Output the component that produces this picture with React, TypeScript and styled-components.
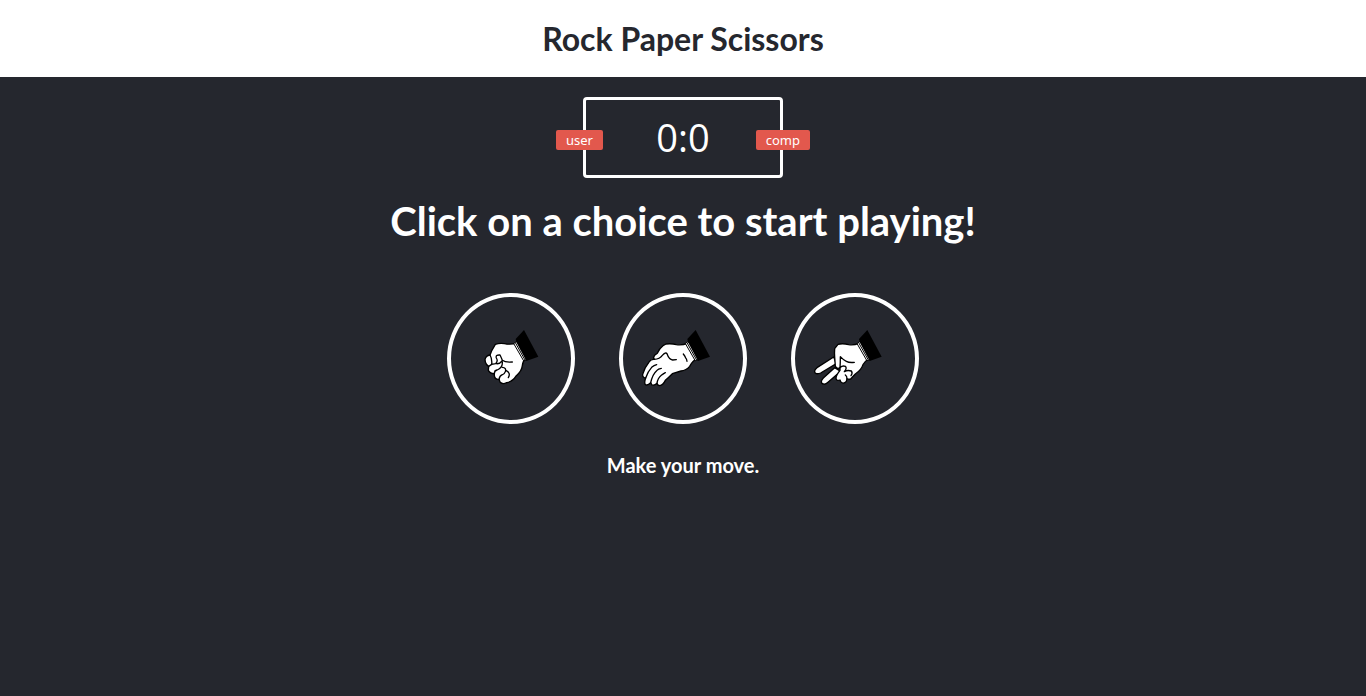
import React from "react";
import styled, { createGlobalStyle } from "styled-components";

const GlobalStyle = createGlobalStyle`
  * { margin: 0; padding: 0; box-sizing: border-box; }
  body {
    background: #25272e;
    font-family: Lato, sans-serif;
  }
`;

const Header = styled.header`
  background: #ffffff;
  padding: 20px;
`;

const Title = styled.h1`
  color: #25272e;
  font-size: 32px;
  line-height: 37px;
  font-weight: 700;
  text-align: center;
`;

const ScoreBoard = styled.section`
  position: relative;
  width: 200px;
  margin: 20px auto;
  padding: 14px 20px;
  border: 3px solid #ffffff;
  border-radius: 4px;
  color: #ffffff;
  font-family: "Open Sans", sans-serif;
  font-size: 38px;
  line-height: 47px;
  text-align: center;
`;

const Badge = styled.div<{ $side: "left" | "right" }>`
  position: absolute;
  top: 30px;
  ${(p) => (p.$side === "left" ? "left: -30px;" : "right: -30px;")}
  padding: 2px 10px;
  border-radius: 2px;
  background: #e2584d;
  font-family: "Noto Sans", sans-serif;
  font-size: 13px;
  line-height: 16px;
`;

const Result = styled.p`
  color: #ffffff;
  font-size: 40px;
  line-height: 46px;
  font-weight: 700;
  text-align: center;
`;

const Choices = styled.div`
  display: flex;
  justify-content: center;
  gap: 44px;
  margin-top: 49px;
`;

const Choice = styled.button`
  display: flex;
  align-items: center;
  justify-content: center;
  width: 128px;
  height: 131px;
  border: 4px solid #ffffff;
  border-radius: 50%;
  background: transparent;
  cursor: pointer;
  transition: background 0.3s ease;

  &:hover { background: #454954; }
`;

const Prompt = styled.p`
  margin-top: 30px;
  color: #ffffff;
  font-size: 20px;
  line-height: 23px;
  font-weight: 700;
  text-align: center;
`;

const Hand = styled.svg`
  display: block;
  flex: none;
  stroke-linecap: round;
  stroke-linejoin: round;
`;

const skin = { fill: "#fff", stroke: "#000", strokeWidth: 4 };
const crease = { fill: "none", stroke: "#000", strokeWidth: 4 };

const Cuff = ({ x }: { x: number }) => (
  <g transform={`translate(${x} 0)`}>
    <path fill="#fff" stroke="#000" strokeWidth="3" d="M-29 69 L-20 62 L10 117 L1 121 Z" />
    <path fill="none" stroke="#000" strokeWidth="3" d="M-25 67 L4 119" />
    <path fill="#000" d="M1 29 L-24 56 L-22 66 L8 122 L44 109 Z" />
  </g>
);

const Rock = () => (
  <Hand width="90" height="70" viewBox="-12 11 270 210" aria-hidden="true">
    <path {...skin} d="M76 72 Q88 68 103 70 Q124 74 139 68 L166 117 Q158 123 157 136 Q155 153 139 166 Q128 184 110 187 Q98 194 90 185 L87 177 Q74 178 73 165 L73 160 Q60 160 55 150 L56 138 Q46 132 45 118 Q47 106 60 104 Q64 91 76 72 Z" />
    <path {...crease} d="M60 104 Q67 116 65 132 L56 138 M65 132 L77 130 Q85 122 79 113 Q76 103 90 104 Q94 112 97 120 Q106 127 127 125 M79 130 Q88 132 96 122 M97 125 Q98 139 87 146 Q80 151 75 151 M73 160 Q73 151 81 149 M97 141 Q110 142 106 154 Q104 161 96 164 M87 177 Q89 166 97 163 M109 151 Q123 158 115 172" />
    <Cuff x={161} />
  </Hand>
);

const Paper = () => (
  <Hand width="90" height="70" viewBox="9 11 270 210" aria-hidden="true">
    <path {...skin} d="M93 71 Q110 69 124 73 Q143 75 157 69 L184 117 Q173 120 164 138 Q154 150 138 152 Q125 156 112 160 Q101 171 91 180 Q84 194 74 196 Q66 195 66 189 Q58 197 51 194 L47 187 Q38 197 31 193 Q27 187 32 173 Q22 172 23 162 Q28 143 43 124 Q48 116 58 117 Q53 112 59 105 L67 99 Q73 84 84 76 Z" />
    <path {...crease} d="M58 117 Q74 116 82 105 Q92 94 96 100 Q102 117 113 119 L124 118 M32 173 Q38 154 50 141 Q57 135 65 133 M47 187 Q53 161 65 151 Q70 145 79 144 M66 189 Q68 174 79 165 Q85 160 91 157 M145 101 Q151 109 151 111 Q156 117 156 123" />
    <Cuff x={181} />
  </Hand>
);

const Scissors = () => (
  <Hand width="90" height="70" viewBox="6 11 270 210" aria-hidden="true">
    <path {...skin} d="M77 110 L27 142 Q17 150 21 157 Q27 163 38 158 L85 130 Z" />
    <path {...skin} d="M80 142 L46 173 Q36 184 43 190 Q51 195 60 186 L98 153 Z" />
    <path {...skin} d="M90 72 Q104 68 122 73 Q139 75 152 69 L181 116 Q173 121 165 133 Q160 149 142 161 Q132 171 128 176 Q120 178 117 175 L115 183 Q106 193 98 184 L96 179 Q86 183 84 174 Q84 165 96 150 L96 142 Q87 148 82 137 L80 110 Q79 98 80 85 Z" />
    <path {...crease} d="M97 110 Q97 130 96 142 M97 109 Q106 119 115 123 Q124 128 139 126 M96 142 Q103 135 112 138 Q118 144 109 154 M109 154 Q119 148 130 152 Q135 158 129 166 M117 175 Q117 168 112 164" />
    <Cuff x={177} />
  </Hand>
);

export default function App() {
  return (
    <>
      <GlobalStyle />
      <Header>
        <Title>Rock Paper Scissors</Title>
      </Header>
      <main>
        <ScoreBoard>
          <Badge $side="left">user</Badge>
          <Badge $side="right">comp</Badge>
          <span>0</span>:<span>0</span>
        </ScoreBoard>
        <Result>Click on a choice to start playing!</Result>
        <Choices>
          <Choice type="button" aria-label="Rock"><Rock /></Choice>
          <Choice type="button" aria-label="Paper"><Paper /></Choice>
          <Choice type="button" aria-label="Scissors"><Scissors /></Choice>
        </Choices>
        <Prompt>Make your move.</Prompt>
      </main>
    </>
  );
}
